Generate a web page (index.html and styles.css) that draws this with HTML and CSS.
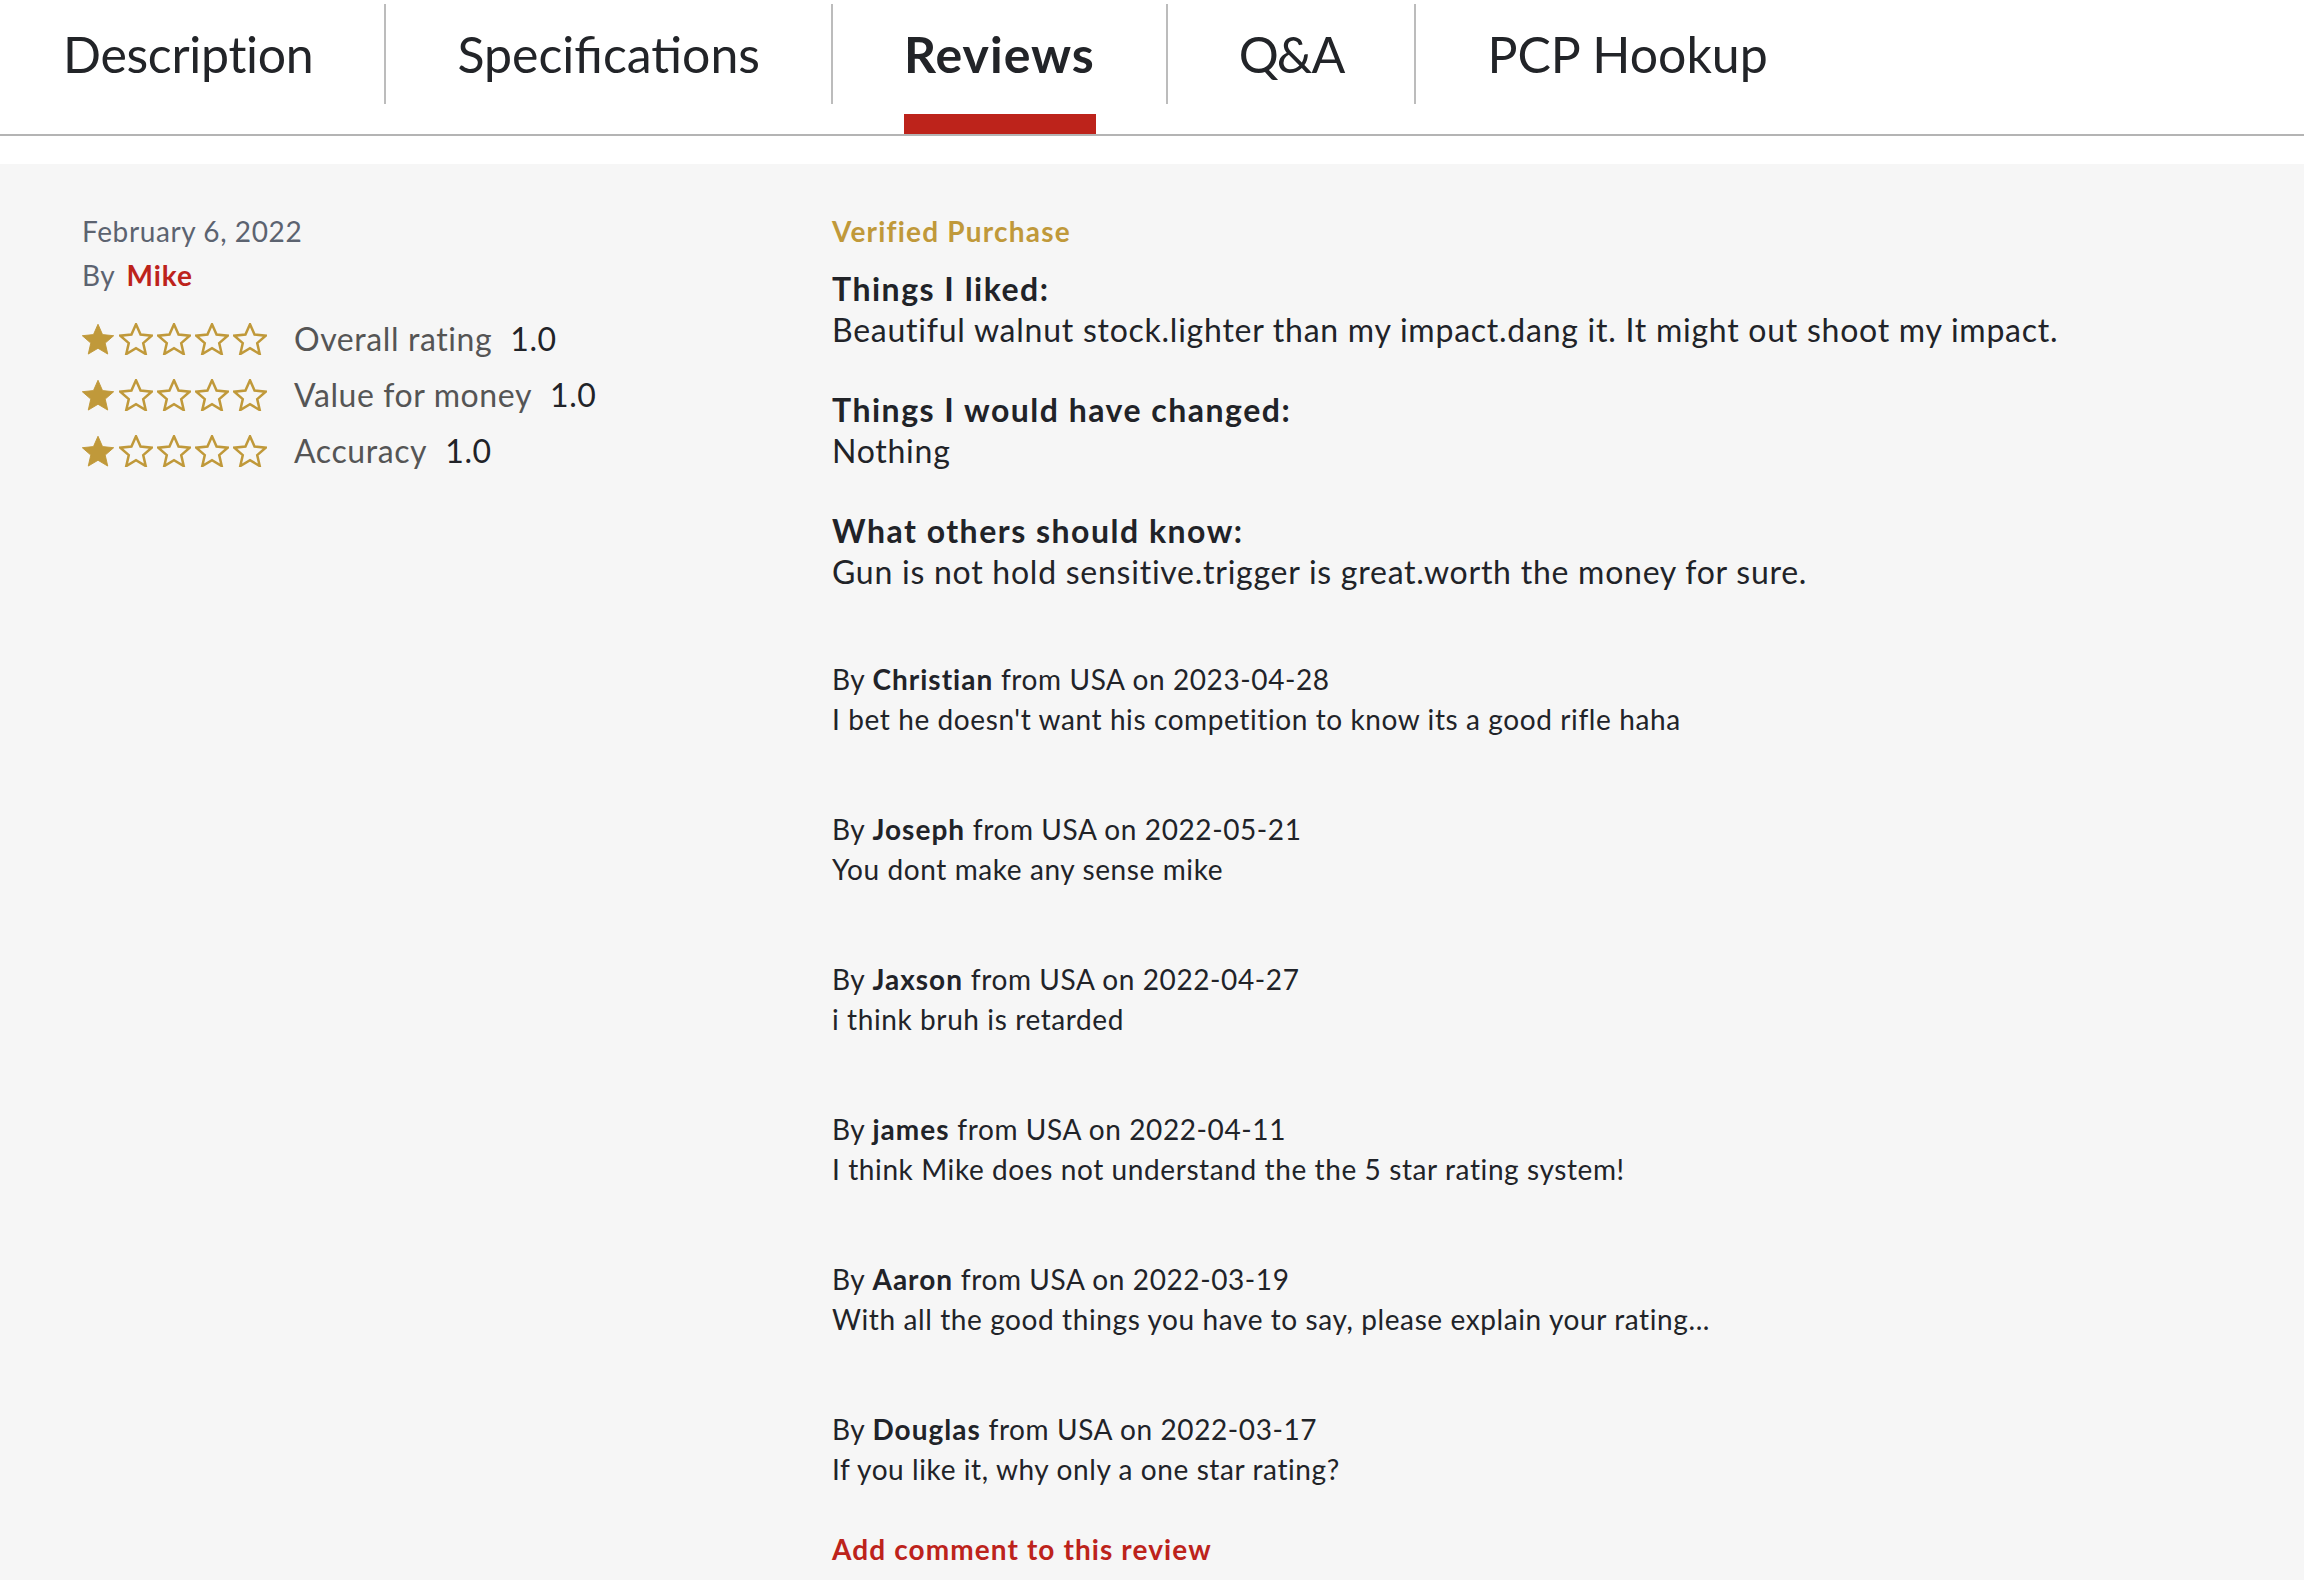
FILE: index.html
```html
<!DOCTYPE html>
<html lang="en">
<head>
  <meta charset="UTF-8">
  <meta name="viewport" content="width=device-width, initial-scale=1.0">
  <title>Reviews</title>
  <link rel="stylesheet" href="styles.css">
</head>
<body>

<div class="tabs">
  <div class="tab first"><span class="tab-label">Description</span><span class="tab-bar"></span></div>
  <div class="tab"><span class="tab-label">Specifications</span><span class="tab-bar"></span></div>
  <div class="tab active"><span class="tab-label">Reviews</span><span class="tab-bar"></span></div>
  <div class="tab qa"><span class="tab-label">Q&amp;A</span><span class="tab-bar"></span></div>
  <div class="tab last"><span class="tab-label">PCP Hookup</span><span class="tab-bar"></span></div>
</div>

<div class="review">
  <div class="review-meta">
    <div class="review-date">February 6, 2022</div>
    <div class="review-author">By <span class="author-name">Mike</span></div>

    <div class="ratings">
      <div class="rating-row">
        <span class="stars">
          <svg class="star" viewBox="1.2 1.2 21.6 20.4"><polygon class="full" points="12,2 14.9,8.6 22,9.3 16.6,14 18.2,21 12,17.3 5.8,21 7.4,14 2,9.3 9.1,8.6"/></svg>
          <svg class="star" viewBox="1.2 1.2 21.6 20.4"><polygon points="12,2 14.9,8.6 22,9.3 16.6,14 18.2,21 12,17.3 5.8,21 7.4,14 2,9.3 9.1,8.6"/></svg>
          <svg class="star" viewBox="1.2 1.2 21.6 20.4"><polygon points="12,2 14.9,8.6 22,9.3 16.6,14 18.2,21 12,17.3 5.8,21 7.4,14 2,9.3 9.1,8.6"/></svg>
          <svg class="star" viewBox="1.2 1.2 21.6 20.4"><polygon points="12,2 14.9,8.6 22,9.3 16.6,14 18.2,21 12,17.3 5.8,21 7.4,14 2,9.3 9.1,8.6"/></svg>
          <svg class="star" viewBox="1.2 1.2 21.6 20.4"><polygon points="12,2 14.9,8.6 22,9.3 16.6,14 18.2,21 12,17.3 5.8,21 7.4,14 2,9.3 9.1,8.6"/></svg>
        </span>
        <span class="rating-label">Overall rating</span>
        <span class="rating-value">1.0</span>
      </div>
      <div class="rating-row">
        <span class="stars">
          <svg class="star" viewBox="1.2 1.2 21.6 20.4"><polygon class="full" points="12,2 14.9,8.6 22,9.3 16.6,14 18.2,21 12,17.3 5.8,21 7.4,14 2,9.3 9.1,8.6"/></svg>
          <svg class="star" viewBox="1.2 1.2 21.6 20.4"><polygon points="12,2 14.9,8.6 22,9.3 16.6,14 18.2,21 12,17.3 5.8,21 7.4,14 2,9.3 9.1,8.6"/></svg>
          <svg class="star" viewBox="1.2 1.2 21.6 20.4"><polygon points="12,2 14.9,8.6 22,9.3 16.6,14 18.2,21 12,17.3 5.8,21 7.4,14 2,9.3 9.1,8.6"/></svg>
          <svg class="star" viewBox="1.2 1.2 21.6 20.4"><polygon points="12,2 14.9,8.6 22,9.3 16.6,14 18.2,21 12,17.3 5.8,21 7.4,14 2,9.3 9.1,8.6"/></svg>
          <svg class="star" viewBox="1.2 1.2 21.6 20.4"><polygon points="12,2 14.9,8.6 22,9.3 16.6,14 18.2,21 12,17.3 5.8,21 7.4,14 2,9.3 9.1,8.6"/></svg>
        </span>
        <span class="rating-label">Value for money</span>
        <span class="rating-value">1.0</span>
      </div>
      <div class="rating-row">
        <span class="stars">
          <svg class="star" viewBox="1.2 1.2 21.6 20.4"><polygon class="full" points="12,2 14.9,8.6 22,9.3 16.6,14 18.2,21 12,17.3 5.8,21 7.4,14 2,9.3 9.1,8.6"/></svg>
          <svg class="star" viewBox="1.2 1.2 21.6 20.4"><polygon points="12,2 14.9,8.6 22,9.3 16.6,14 18.2,21 12,17.3 5.8,21 7.4,14 2,9.3 9.1,8.6"/></svg>
          <svg class="star" viewBox="1.2 1.2 21.6 20.4"><polygon points="12,2 14.9,8.6 22,9.3 16.6,14 18.2,21 12,17.3 5.8,21 7.4,14 2,9.3 9.1,8.6"/></svg>
          <svg class="star" viewBox="1.2 1.2 21.6 20.4"><polygon points="12,2 14.9,8.6 22,9.3 16.6,14 18.2,21 12,17.3 5.8,21 7.4,14 2,9.3 9.1,8.6"/></svg>
          <svg class="star" viewBox="1.2 1.2 21.6 20.4"><polygon points="12,2 14.9,8.6 22,9.3 16.6,14 18.2,21 12,17.3 5.8,21 7.4,14 2,9.3 9.1,8.6"/></svg>
        </span>
        <span class="rating-label">Accuracy</span>
        <span class="rating-value">1.0</span>
      </div>
    </div>
  </div>

  <div class="review-body">
    <div class="verified">Verified Purchase</div>

    <div class="review-block">
      <div class="block-title">Things I liked:</div>
      <div class="block-text">Beautiful walnut stock.lighter than my impact.dang it. It might out shoot my impact.</div>
    </div>
    <div class="review-block">
      <div class="block-title">Things I would have changed:</div>
      <div class="block-text">Nothing</div>
    </div>
    <div class="review-block">
      <div class="block-title">What others should know:</div>
      <div class="block-text">Gun is not hold sensitive.trigger is great.worth the money for sure.</div>
    </div>

    <div class="comments">
      <div class="comment">
        <div class="comment-meta">By <b>Christian</b> from USA on 2023-04-28</div>
        <div class="comment-text">I bet he doesn't want his competition to know its a good rifle haha</div>
      </div>
      <div class="comment">
        <div class="comment-meta">By <b>Joseph</b> from USA on 2022-05-21</div>
        <div class="comment-text">You dont make any sense mike</div>
      </div>
      <div class="comment">
        <div class="comment-meta">By <b>Jaxson</b> from USA on 2022-04-27</div>
        <div class="comment-text">i think bruh is retarded</div>
      </div>
      <div class="comment">
        <div class="comment-meta">By <b>james</b> from USA on 2022-04-11</div>
        <div class="comment-text">I think Mike does not understand the the 5 star rating system!</div>
      </div>
      <div class="comment">
        <div class="comment-meta">By <b>Aaron</b> from USA on 2022-03-19</div>
        <div class="comment-text">With all the good things you have to say, please explain your rating...</div>
      </div>
      <div class="comment">
        <div class="comment-meta">By <b>Douglas</b> from USA on 2022-03-17</div>
        <div class="comment-text">If you like it, why only a one star rating?</div>
      </div>
    </div>

    <a class="add-comment" href="#">Add comment to this review</a>
  </div>
</div>

</body>
</html>
```

FILE: styles.css
```css
body {
  font-family: 'Lato', 'Liberation Sans', sans-serif;
  margin: 0;
  background-color: #fff;
  color: #212328;
}

.tabs {
  display: flex;
  border-bottom: 2px solid #b4b4b4;
  margin-bottom: 28px;
}

.tab {
  display: flex;
  flex-direction: column;
  padding-top: 4px;
}

.tab-label {
  display: flex;
  align-items: center;
  height: 100px;
  padding: 0 71px;
  border-right: 2px solid #bcbcbc;
  font-size: 50px;
  color: #222428;
}

.tab.first .tab-label {
  padding-left: 63px;
  letter-spacing: -0.3px;
}

.tab.qa .tab-label {
  letter-spacing: -2px;
}

.tab.last .tab-label {
  border-right: none;
}

.tab-bar {
  height: 20px;
  margin: 10px 72px 0 71px;
}

.tab.first .tab-bar {
  margin-left: 63px;
}

.tab.active .tab-label {
  font-weight: 700;
  letter-spacing: 1px;
}

.tab.active .tab-bar {
  background-color: #bd231b;
}

.review {
  display: flex;
  min-height: 1416px;
  padding: 47px 0 0 82px;
  box-sizing: border-box;
  background-color: #f6f6f6;
}

.review-meta {
  width: 750px;
  flex-shrink: 0;
}

.review-date {
  font-size: 28px;
  line-height: 40px;
  letter-spacing: 0.6px;
  color: #5c6370;
}

.review-author {
  margin-top: 4px;
  font-size: 28px;
  line-height: 40px;
  letter-spacing: 0.6px;
  color: #5c6370;
}

.author-name {
  margin-left: 4px;
  font-weight: 700;
  letter-spacing: 1px;
  color: #bd231b;
}

.ratings {
  display: flex;
  flex-direction: column;
  gap: 16px;
  margin-top: 24px;
}

.rating-row {
  display: flex;
  align-items: center;
  height: 40px;
  font-size: 32px;
  line-height: 40px;
  letter-spacing: 0.6px;
}

.stars {
  display: flex;
  gap: 4px;
  margin-left: -1px;
  margin-right: 27px;
}

.star {
  width: 34px;
  height: 32px;
}

.star polygon {
  fill: none;
  stroke: #c0993a;
  stroke-width: 1.6;
  stroke-linejoin: miter;
}

.star polygon.full {
  fill: #c0993a;
  stroke-width: 0.6;
}

.rating-label {
  color: #555;
}

.rating-value {
  margin-left: 18px;
  color: #212328;
}

.review-body {
  flex: 1;
}

.verified {
  font-size: 28px;
  line-height: 40px;
  font-weight: 700;
  letter-spacing: 1.2px;
  color: #c0993a;
}

.review-block {
  margin-top: 17px;
  font-size: 32px;
  line-height: 41px;
  letter-spacing: 0.75px;
}

.review-block + .review-block {
  margin-top: 39px;
}

.block-title {
  font-weight: 700;
  letter-spacing: 1.5px;
}

.comments {
  display: flex;
  flex-direction: column;
  gap: 70px;
  margin-top: 67px;
}

.comment {
  font-size: 28px;
  line-height: 40px;
  letter-spacing: 0.6px;
}

.comment b {
  font-weight: 700;
  letter-spacing: 1px;
}

.add-comment {
  display: inline-block;
  margin-top: 40px;
  font-size: 28px;
  line-height: 40px;
  font-weight: 700;
  letter-spacing: 1.1px;
  color: #bd231b;
  text-decoration: none;
}
```
